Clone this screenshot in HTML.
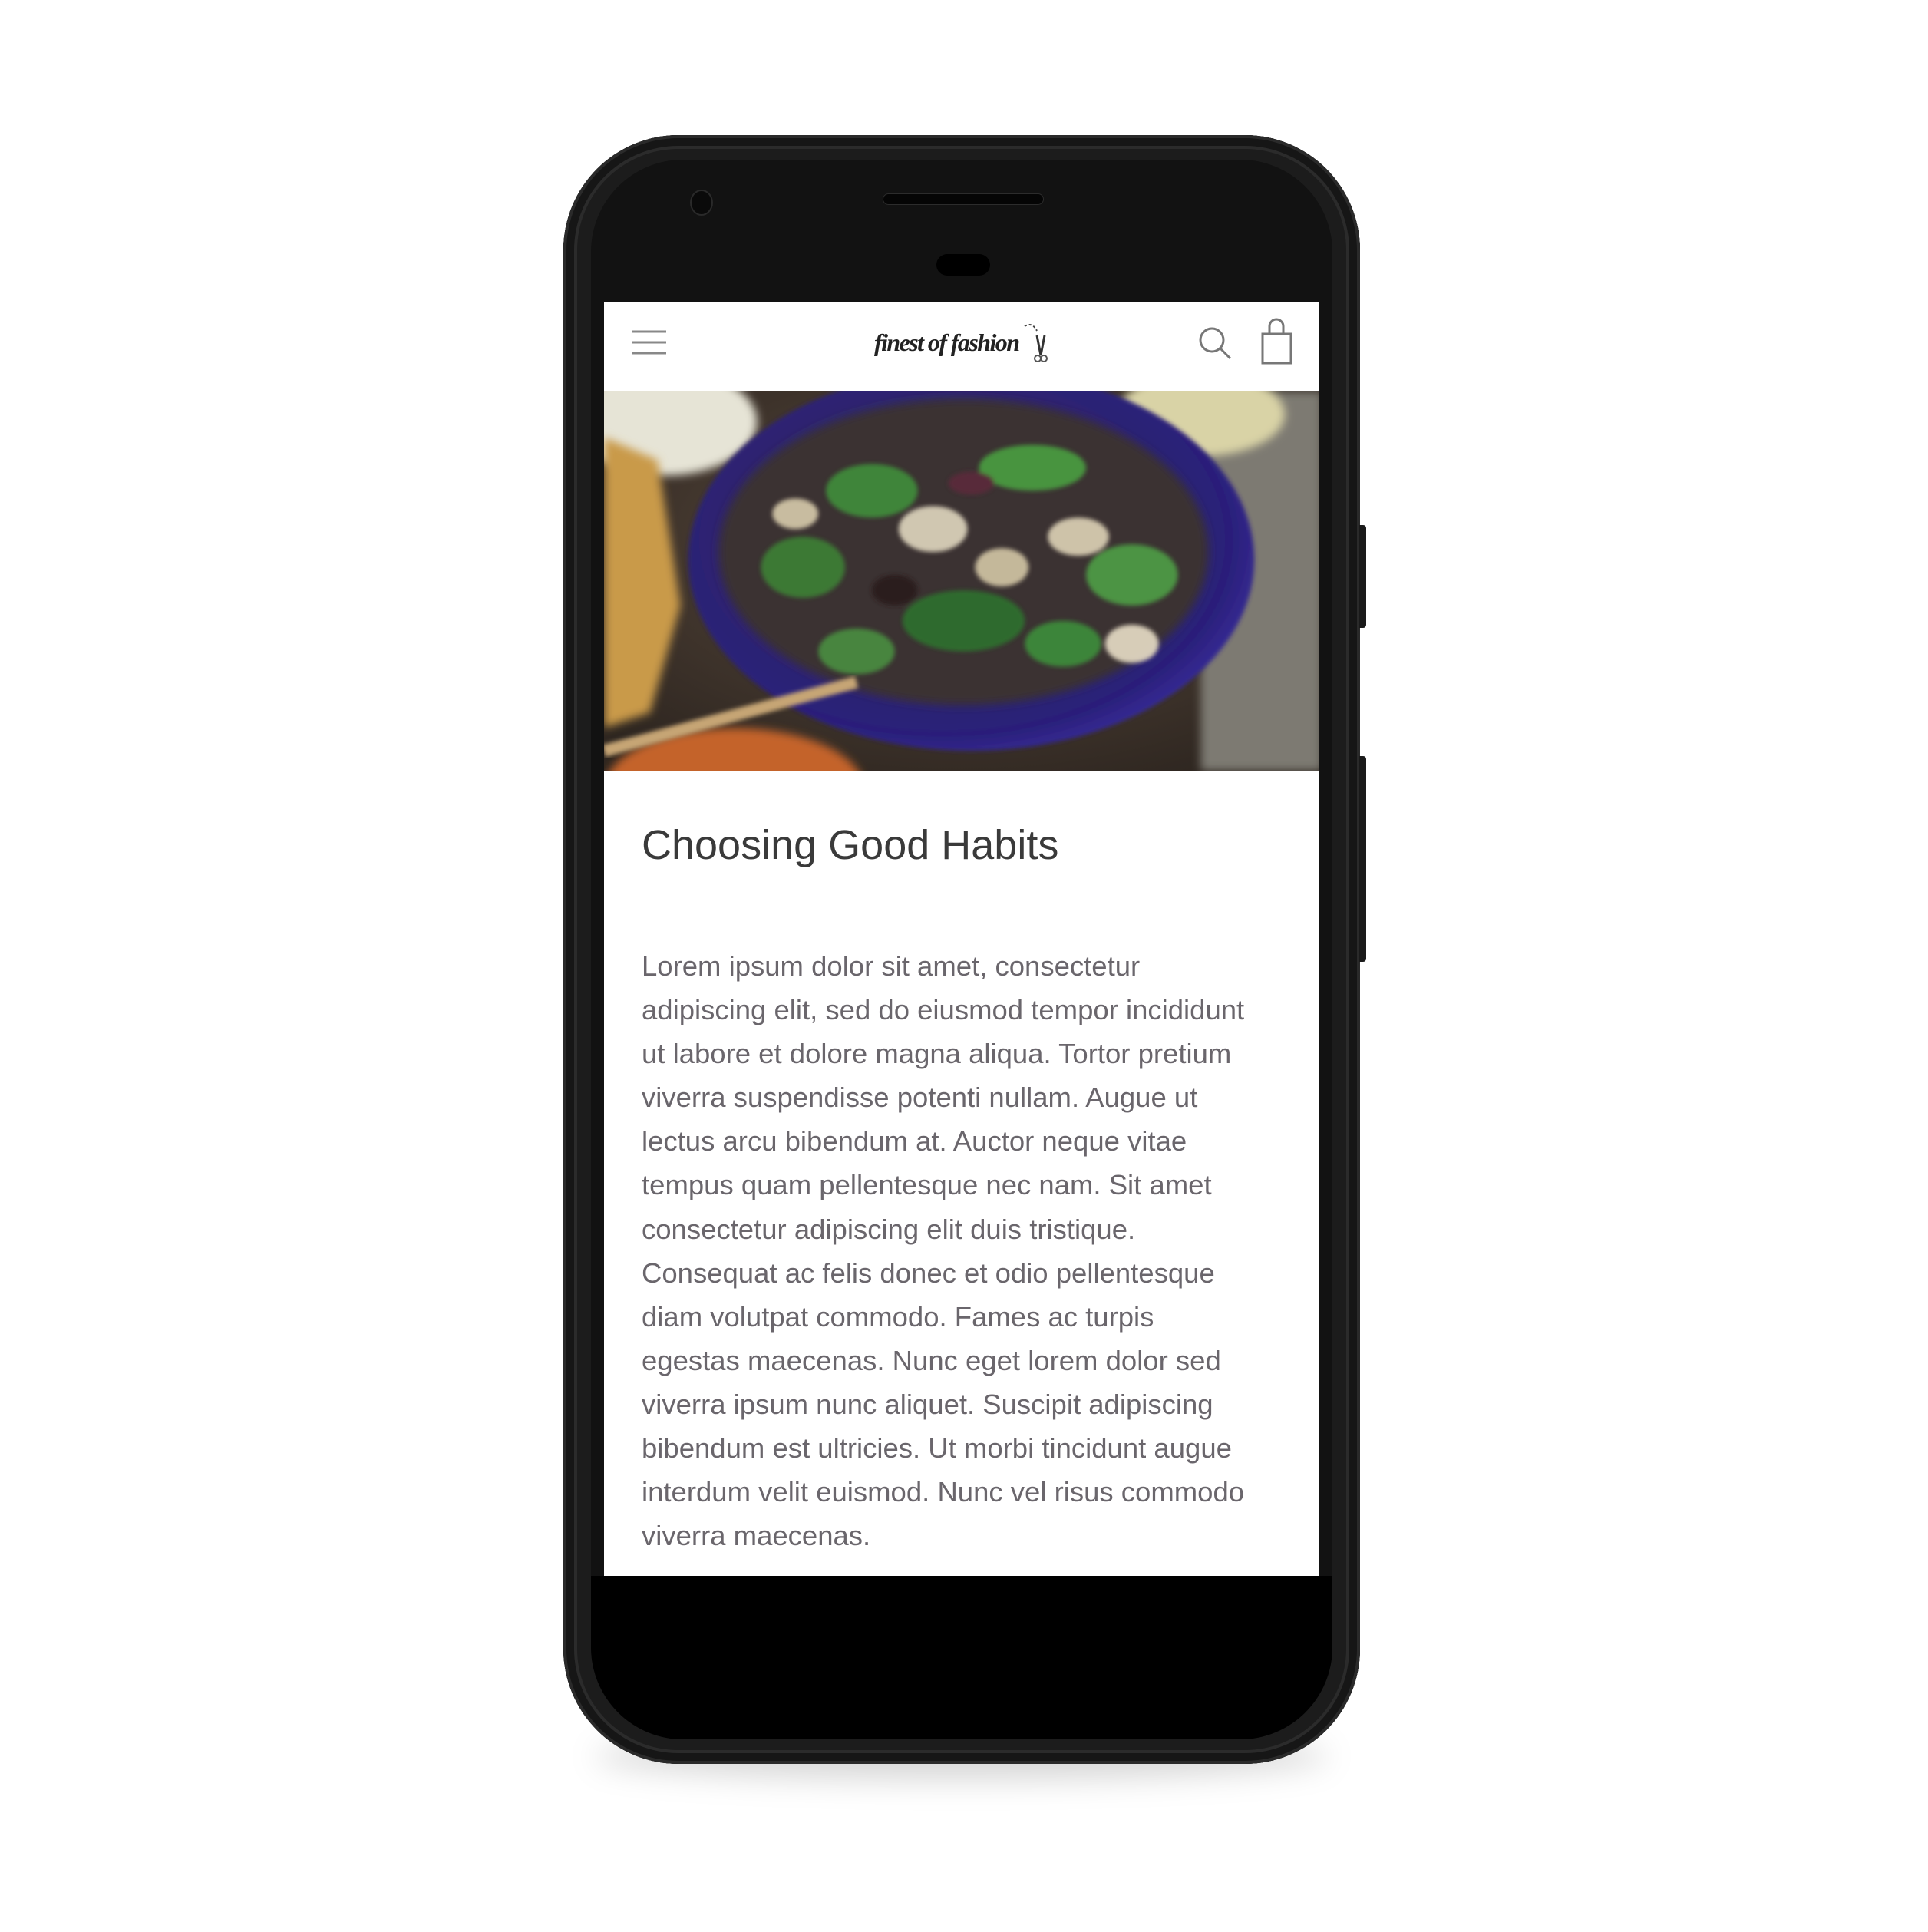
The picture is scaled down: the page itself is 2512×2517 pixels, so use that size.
<!DOCTYPE html>
<html><head><meta charset="utf-8"><style>
html,body{margin:0;padding:0;background:#fff;width:2512px;height:2517px;overflow:hidden;position:relative;font-family:"Liberation Sans",sans-serif}
.shadow{position:absolute;left:775px;top:2258px;width:956px;height:60px;border-radius:50%;background:rgba(0,0,0,.16);filter:blur(20px)}
.phone{position:absolute;left:734px;top:176px;width:1038px;height:2122px;border-radius:150px;background:#1c1c1c;box-shadow:inset 0 0 0 4px #2a2a2a,inset 0 0 0 14px #161616,inset 0 0 0 18px #2b2b2b}
.btn{position:absolute;left:1770px;width:10px;background:#1a1a1a;border-radius:0 4px 4px 0}
.screenbg{position:absolute;left:770px;top:208px;width:966px;height:2058px;border-radius:120px;background:#121212}
.lower{position:absolute;left:770px;top:2053px;width:966px;height:213px;background:#000;border-radius:0 0 120px 120px}
.screen{position:absolute;left:787px;top:393px;width:931px;height:1660px;background:#fff;overflow:hidden}
.speaker{position:absolute;left:1150px;top:252px;width:208px;height:13px;border-radius:8px;background:#050505;border:1px solid #2c2c2c}
.cam{position:absolute;left:899px;top:247px;width:26px;height:30px;border-radius:50%;background:#0a0a0a;border:2px solid #2a2a2a}
.sensor{position:absolute;left:1220px;top:331px;width:70px;height:28px;border-radius:14px;background:#000}
.hdr{position:absolute;left:0;top:0;width:931px;height:116px}
.img{position:absolute;left:0;top:116px;width:931px;height:496px;overflow:hidden;background:#4a3c33}
h1{position:absolute;left:49px;top:676px;margin:0;font-weight:normal;font-size:54px;color:#3a3a3a;line-height:64px;white-space:nowrap}
.body{position:absolute;left:49px;top:837px;font-size:36.5px;line-height:57.1px;color:#6a666c;white-space:nowrap}
</style></head><body>
<div class="shadow"></div>
<div class="phone"></div>
<div class="btn" style="top:684px;height:134px"></div>
<div class="btn" style="top:985px;height:268px"></div>
<div class="screenbg"></div>
<div class="lower"></div>
<div class="speaker"></div>
<div class="cam"></div>
<div class="sensor"></div>
<div class="screen">
 <div class="hdr">
  <svg width="931" height="116" viewBox="0 0 931 116">
   <g stroke="#888" stroke-width="3"><line x1="36" y1="39" x2="81" y2="39"/><line x1="36" y1="53" x2="81" y2="53"/><line x1="36" y1="67" x2="81" y2="67"/></g>
   <circle cx="792" cy="50" r="15" fill="none" stroke="#777" stroke-width="3"/><line x1="803" y1="61" x2="816" y2="74" stroke="#777" stroke-width="3"/>
   <rect x="858" y="42" width="37" height="38" fill="none" stroke="#777" stroke-width="3"/><path d="M867 42v-10a9 9 0 0 1 18 0v10" fill="none" stroke="#777" stroke-width="3"/>
   <text x="352" y="64" font-family="Liberation Serif,serif" font-style="italic" font-weight="bold" font-size="32" fill="#222" textLength="190">finest of fashion</text>
   <path d="M548 32q10-6 16 6" fill="none" stroke="#444" stroke-width="2" stroke-dasharray="3 3"/>
   <path d="M564 44l5 26M574 44l-5 26" stroke="#333" stroke-width="3"/><circle cx="565" cy="74" r="4" fill="none" stroke="#555" stroke-width="2"/><circle cx="573" cy="74" r="4" fill="none" stroke="#555" stroke-width="2"/>
  </svg>
 </div>
 <div class="img">
  <svg width="931" height="496" viewBox="0 0 934 496">
   <defs>
    <radialGradient id="bg" cx="50%" cy="40%" r="70%"><stop offset="0" stop-color="#5a4a3e"/><stop offset="1" stop-color="#2e2620"/></radialGradient>
    <radialGradient id="bowl" cx="45%" cy="45%" r="60%"><stop offset="0" stop-color="#3a3550"/><stop offset=".85" stop-color="#2a1f7a"/><stop offset="1" stop-color="#3b2fa0"/></radialGradient>
    <filter id="b"><feGaussianBlur stdDeviation="6"/></filter>
    <filter id="b2"><feGaussianBlur stdDeviation="3"/></filter>
   </defs>
   <rect width="934" height="496" fill="url(#bg)"/>
   <rect x="780" y="0" width="159" height="496" fill="#7d7a72" filter="url(#b)"/>
   <ellipse cx="80" cy="40" rx="120" ry="70" fill="#e6e4d6" filter="url(#b)"/>
   <ellipse cx="780" cy="30" rx="110" ry="55" fill="#d9d3a6" filter="url(#b)"/>
   <path d="M0 60 L70 90 L100 280 L60 420 L0 440Z" fill="#c99a4a" filter="url(#b)"/>
   <ellipse cx="170" cy="520" rx="170" ry="80" fill="#c4632a" filter="url(#b)"/>
   <ellipse cx="480" cy="220" rx="370" ry="250" fill="url(#bowl)" filter="url(#b2)"/>
   <ellipse cx="470" cy="210" rx="320" ry="200" fill="#3a3030" filter="url(#b)"/>
   <g filter="url(#b2)" opacity=".95">
    <ellipse cx="350" cy="130" rx="60" ry="35" fill="#3f8a3a"/>
    <ellipse cx="560" cy="100" rx="70" ry="30" fill="#4a9a40"/>
    <ellipse cx="260" cy="230" rx="55" ry="40" fill="#3d7d36"/>
    <ellipse cx="690" cy="240" rx="60" ry="40" fill="#4d9a44"/>
    <ellipse cx="470" cy="300" rx="80" ry="40" fill="#2f6e2e"/>
    <ellipse cx="600" cy="330" rx="50" ry="30" fill="#3c8a3a"/>
    <ellipse cx="330" cy="340" rx="50" ry="30" fill="#4a8a40"/>
    <ellipse cx="430" cy="180" rx="45" ry="30" fill="#d8cfb8"/>
    <ellipse cx="620" cy="190" rx="40" ry="25" fill="#d6cbb0"/>
    <ellipse cx="520" cy="230" rx="35" ry="25" fill="#ccc0a0"/>
    <ellipse cx="690" cy="330" rx="35" ry="25" fill="#e0d6c0"/>
    <ellipse cx="250" cy="160" rx="30" ry="20" fill="#d0c4a6"/>
    <ellipse cx="480" cy="120" rx="30" ry="15" fill="#5a2a3a"/>
    <ellipse cx="380" cy="260" rx="30" ry="20" fill="#2a1a1a"/>
   </g>
   <path d="M0 470 L330 380" stroke="#c6a574" stroke-width="16" filter="url(#b2)"/>
  </svg>
 </div>
 <h1>Choosing Good Habits</h1>
 <div class="body">Lorem ipsum dolor sit amet, consectetur<br>adipiscing elit, sed do eiusmod tempor incididunt<br>ut labore et dolore magna aliqua. Tortor pretium<br>viverra suspendisse potenti nullam. Augue ut<br>lectus arcu bibendum at. Auctor neque vitae<br>tempus quam pellentesque nec nam. Sit amet<br>consectetur adipiscing elit duis tristique.<br>Consequat ac felis donec et odio pellentesque<br>diam volutpat commodo. Fames ac turpis<br>egestas maecenas. Nunc eget lorem dolor sed<br>viverra ipsum nunc aliquet. Suscipit adipiscing<br>bibendum est ultricies. Ut morbi tincidunt augue<br>interdum velit euismod. Nunc vel risus commodo<br>viverra maecenas.</div>
</div>
</body></html>
